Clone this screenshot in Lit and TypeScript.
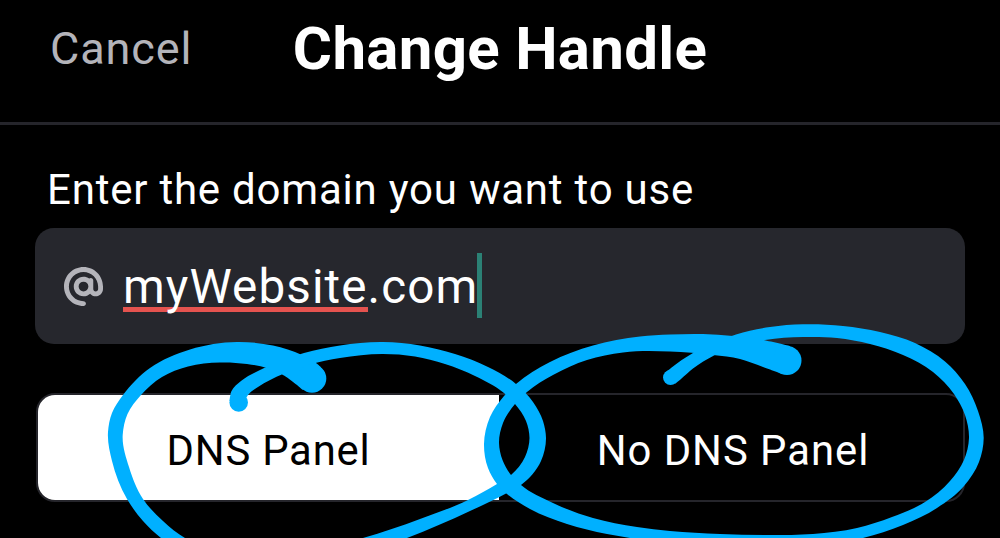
import { LitElement, html, css, svg } from "lit";
import { customElement } from "lit/decorators.js";

type Point = [number, number];

interface Stroke {
  outer: Point[];
  inner: Point[];
  start: [number, number, number];
  end: [number, number, number];
}

// Each marker stroke is a ribbon between two edges, capped by a dot (x, y, r).
const STROKES: Stroke[] = [
  {
    outer: [
      [229.5, 401], [231.5, 391], [241, 381], [260, 370], [280, 361],
      [304, 353], [340, 345.5], [383, 342], [420, 345.5], [455, 354],
      [488, 367], [516, 384], [533, 402], [543, 421], [546, 438], [541, 461],
      [521, 485], [507, 493], [470, 511], [407, 538], [340, 560], [270, 570],
      [200, 560], [161, 538], [143, 521], [127, 499], [112, 461], [108, 432],
      [112, 413], [123, 395], [150, 368], [190, 349.5], [237, 342],
      [273, 345.5], [302, 355], [318, 364.5], [325, 373],
    ],
    inner: [
      [245, 400], [248, 395], [258, 387], [283, 374], [310, 364.5],
      [340, 358], [383, 354], [415, 356.5], [445, 364], [475, 376],
      [504, 393], [515, 404], [526, 421], [529.5, 438], [525, 457],
      [511, 475], [497, 484], [468, 500], [420, 519], [363, 538],
      [320, 548], [270, 554], [220, 550], [185, 538], [163, 521],
      [143, 499], [129, 467], [122.7, 435], [127.5, 414], [141, 395],
      [162, 377], [188, 366.5], [220, 362.5], [247, 364], [267, 368],
      [283, 375], [303, 390],
    ],
    start: [238.7, 402.5, 9.3],
    end: [312, 378.5, 14.3],
  },
  {
    outer: [
      [665, 373], [671, 368], [693, 353], [713, 343], [736, 334.5],
      [770, 327], [803, 324.3], [843, 326], [880, 332], [915, 343],
      [945, 361.5], [965, 384], [978, 411], [983.7, 438], [979, 462],
      [964, 486], [937, 508], [903, 525], [863, 538], [810, 546], [740, 549],
      [680, 546], [630, 538], [607, 534], [567, 524], [530, 509], [507, 494],
      [497, 484], [488, 468], [484, 444], [490, 417], [504, 396], [516, 384],
      [550, 362], [593, 345.5], [640, 336.5], [670, 334.5], [703, 334],
      [733, 336], [763, 340], [790, 346],
    ],
    inner: [
      [675, 384], [681, 379], [693, 368.5], [714, 355.5], [738, 346],
      [765, 340], [803, 337], [837, 338], [870, 344], [903, 355],
      [933, 372], [954, 394], [965, 415], [969, 438], [964, 460],
      [950, 481], [925, 502], [892, 517], [857, 528], [813, 534],
      [770, 535], [720, 534], [670, 531], [637, 527], [593, 518],
      [553, 503], [521, 485], [511, 475], [502.5, 460], [499, 443],
      [503, 423], [515, 404], [527, 392], [553, 375], [587, 360],
      [623, 352.5], [670, 351.5], [713, 355], [740, 359], [763, 367],
      [782, 374],
    ],
    start: [670.5, 377.5, 7.5],
    end: [787, 360.5, 14.5],
  },
];

function distance(a: Point, b: Point): number {
  return Math.hypot(b[0] - a[0], b[1] - a[1]);
}

// Unit-speed tangent at a point, weighted towards the nearer neighbour.
function tangent(prev: Point, p: Point, next: Point): Point {
  const before = distance(prev, p) || 1;
  const after = distance(p, next) || 1;
  const axis = (i: 0 | 1) =>
    (((p[i] - prev[i]) / before) * after + ((next[i] - p[i]) / after) * before) /
    (before + after);
  return [axis(0), axis(1)];
}

function curve(points: Point[]): string {
  const tangents = points.map((p, i) =>
    tangent(points[i - 1] ?? p, p, points[i + 1] ?? p)
  );
  let d = "";
  for (let i = 0; i < points.length - 1; i++) {
    const [p, q] = [points[i], points[i + 1]];
    const [t, u] = [tangents[i], tangents[i + 1]];
    const k = distance(p, q) / 3;
    d += `C${p[0] + t[0] * k},${p[1] + t[1] * k} ${q[0] - u[0] * k},${q[1] - u[1] * k} ${q}`;
  }
  return d;
}

function ribbon({ outer, inner }: Stroke): string {
  const back = [...inner].reverse();
  return `M${outer[0]}${curve(outer)}L${back[0]}${curve(back)}Z`;
}

@customElement("marker-circles")
export class MarkerCircles extends LitElement {
  static styles = css`
    :host {
      position: absolute;
      inset: 0;
      pointer-events: none;
    }

    svg {
      display: block;
      fill: #00b0ff;
    }
  `;

  render() {
    return html`
      <svg width="1000" height="538" viewBox="0 0 1000 538">
        ${STROKES.map(
          (s) => svg`
            <path d=${ribbon(s)} />
            <circle cx=${s.start[0]} cy=${s.start[1]} r=${s.start[2]} />
            <circle cx=${s.end[0]} cy=${s.end[1]} r=${s.end[2]} />
          `
        )}
      </svg>
    `;
  }
}

@customElement("app-root")
export class AppRoot extends LitElement {
  static styles = css`
    :host {
      --color-bg: #000;
      --color-text: #fff;
      --color-muted: #b4b4ba;
      --color-field: #26272d;
      --color-line: #25252b;
      display: block;
      position: relative;
      width: 1000px;
      height: 538px;
      overflow: hidden;
      background: var(--color-bg);
      color: var(--color-text);
      font-family: Roboto, "Liberation Sans", sans-serif;
      white-space: nowrap;
    }

    * {
      box-sizing: border-box;
    }

    header {
      display: grid;
      grid-template-columns: 1fr auto 1fr;
      align-items: start;
      height: 125px;
      padding: 14px 50px 0;
      border-bottom: 3px solid var(--color-line);
    }

    .cancel {
      color: var(--color-muted);
      font-size: 45px;
      line-height: 69px;
      letter-spacing: 0.9px;
    }

    h1 {
      margin: 0;
      font-size: 60px;
      line-height: 70px;
      font-weight: 700;
      letter-spacing: 0.3px;
    }

    main {
      padding: 40px 35px 0;
    }

    label {
      display: block;
      height: 63px;
      padding-left: 12px;
      font-size: 42px;
      line-height: 50px;
      letter-spacing: 0.78px;
    }

    .field {
      display: flex;
      align-items: center;
      height: 116px;
      padding-left: 29px;
      border-radius: 19px;
      background: var(--color-field);
    }

    .at {
      width: 39px;
      height: 39px;
      margin-right: 20px;
      fill: var(--color-muted);
    }

    .value {
      padding-top: 2px;
      font-size: 47.6px;
      line-height: 56px;
      letter-spacing: 1.1px;
    }

    .misspelled {
      display: inline-block;
      background: linear-gradient(#e5534f, #e5534f) 0 48px / 100% 5px no-repeat;
    }

    .caret {
      width: 5px;
      height: 65px;
      margin: -1px 0 0 -1px;
      background: #2b8175;
    }

    .tabs {
      display: grid;
      grid-template-columns: 461px 1fr;
      height: 109px;
      margin: 49px 0 0 1px;
      border: 2px solid var(--color-line);
      border-radius: 19px;
      overflow: hidden;
    }

    .tab {
      display: flex;
      align-items: center;
      justify-content: center;
      padding: 5px 0 0 4px;
      font-size: 41.8px;
      letter-spacing: 1px;
    }

    .tab.selected {
      padding-left: 0;
      background: #fff;
      color: #000;
      letter-spacing: 0.8px;
    }
  `;

  render() {
    return html`
      <header>
        <span class="cancel">Cancel</span>
        <h1>Change Handle</h1>
      </header>
      <main>
        <label>Enter the domain you want to use</label>
        <div class="field">
          <svg class="at" viewBox="0 0 512 512">
            <path
              d="M256 64C150 64 64 150 64 256s86 192 192 192c17.7 0 32 14.3 32 32s-14.3 32-32 32C114.6 512 0 397.4 0 256S114.6 0 256 0S512 114.6 512 256v32c0 53-43 96-96 96c-29.3 0-55.6-13.2-73.2-33.9C320 371.1 289.5 384 256 384c-70.7 0-128-57.3-128-128s57.3-128 128-128c27.9 0 53.7 8.9 74.7 24.1c5.7-5 13.1-8.1 21.3-8.1c17.7 0 32 14.3 32 32v112c0 17.7 14.3 32 32 32s32-14.3 32-32V256c0-106-86-192-192-192zm64 192a64 64 0 1 0 -128 0 64 64 0 1 0 128 0z"
            />
          </svg>
          <span class="value"><span class="misspelled">myWebsite</span>.com</span>
          <span class="caret"></span>
        </div>
        <div class="tabs">
          <div class="tab selected">DNS Panel</div>
          <div class="tab">No DNS Panel</div>
        </div>
      </main>
      <marker-circles></marker-circles>
    `;
  }
}
